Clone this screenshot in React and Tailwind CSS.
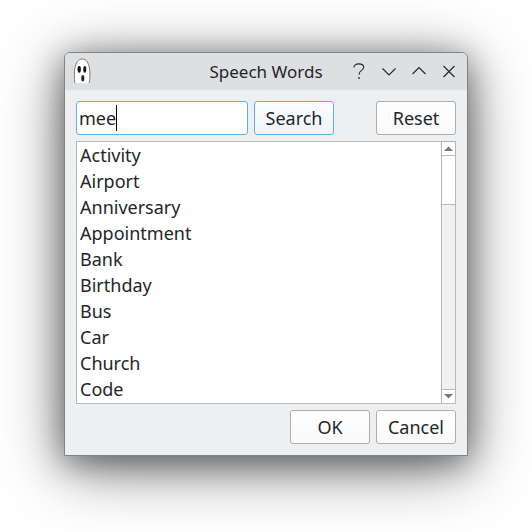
const words = [
  'Activity', 'Airport', 'Anniversary', 'Appointment', 'Bank',
  'Birthday', 'Bus', 'Car', 'Church', 'Code',
];

function GhostIcon() {
  return (
    <svg className="-mt-px" width="18" height="26" viewBox="0 0 18 26" fill="none">
      <path d="M1.900 25C.8 17 .6 1 9.200 1c8.400 0 8.600 16 6.900 24z" fill="#fff" />
      <path d="M1.900 25C.8 17 .6 1 9.200 1c8.400 0 8.600 16 6.900 24" stroke="#777" strokeWidth="1" />
      <ellipse cx="6.200" cy="11.300" rx="1.700" ry="3.400" fill="#111" />
      <ellipse cx="11.800" cy="11.300" rx="1.500" ry="3.400" fill="#111" />
      <ellipse cx="9.800" cy="20.300" rx="1.500" ry="3.200" fill="#222" />
    </svg>
  );
}

function TitleIcon({ d, children }) {
  return (
    <svg width="18" height="18" viewBox="0 0 18 18" fill="none" stroke="#232629" strokeWidth="1.1">
      <path d={d} />
      {children}
    </svg>
  );
}

function Button({ children, active }) {
  return (
    <button
      className={
        'flex h-[34px] w-20 items-center justify-center rounded-[3px] border bg-linear-to-b text-[18px] leading-6 ' +
        (active ? 'border-[#5ab5e2] from-[#fdfdfe] to-[#eef4fa]' : 'border-[#adaeb0] from-white to-[#f9f9fa]')
      }
    >
      {children}
    </button>
  );
}

export default function App() {
  return (
    <div className="h-[532px] w-[532px] overflow-hidden bg-white pl-16 pt-[52px] font-['Noto_Sans',sans-serif] text-[#232629]">
      <div className="flex h-[404px] w-[404px] flex-col rounded-t-[6px] border border-[#818283] bg-[#eeeff1] shadow-[0_12px_64px_rgba(0,0,0,0.5),0_6px_32px_rgba(0,0,0,0.42)]">
        <header className="grid h-[37px] shrink-0 grid-cols-[1fr_auto_1fr] items-center rounded-t-[5px] bg-[#dedfe1] pl-2 pr-[9px]">
          <GhostIcon />
          <h1 className="pl-px text-[17px] leading-6">Speech Words</h1>
          <div className="-mt-px flex justify-end gap-3">
            <TitleIcon d="M3.900 5.500C3.900 3.200 5.800 1.900 8.700 1.900C11.900 1.900 13.700 3.200 13.700 5.200C13.700 7 12.500 7.800 11.300 8.600C9.800 9.600 9 10.500 9 12.800">
              <rect x="8.200" y="15.200" width="1.600" height="1.600" fill="#232629" stroke="none" />
            </TitleIcon>
            <TitleIcon d="M2.500 6.500l6.500 6.500L15.500 6.500" />
            <TitleIcon d="M2.500 12L9 5.500l6.500 6.500" />
            <TitleIcon d="M3.500 4l11 11M14.500 4l-11 11" />
          </div>
        </header>
        <main className="flex flex-1 flex-col gap-1.5 px-[11px] pb-[11px] pt-[11px]">
          <div className="flex gap-1.5">
            <div className="flex h-[34px] w-[172px] items-center rounded-[3px] border border-[#5ab5e2] bg-white pl-0.5 text-[18px]">
              <span className="leading-6">mee</span>
              <span className="h-[26px] w-px bg-black" />
            </div>
            <Button active>Search</Button>
            <div className="ml-auto">
              <Button>Reset</Button>
            </div>
          </div>
          <div className="flex h-[263px] border border-[#b7b8ba] bg-white">
            <ul className="flex-1 pl-[3px] text-[18px] leading-[26px]">
              {words.map((word) => (
                <li key={word}>{word}</li>
              ))}
            </ul>
            <div className="flex w-3.5 flex-col border-l border-[#b7b8ba] bg-[#f1f1f2]">
              <div className="flex h-3.5 items-center justify-center border-b border-[#b7b8ba] bg-white">
                <svg width="9" height="5" viewBox="0 0 9 5"><path d="M0 5l4.500-4.500L9 5z" fill="#76787a" /></svg>
              </div>
              <div className="h-[49px] border-b border-[#b7b8ba] bg-white" />
              <div className="mt-auto flex h-3.5 items-center justify-center border-t border-[#b7b8ba] bg-white">
                <svg width="9" height="5" viewBox="0 0 9 5"><path d="M0 0h9L4.500 4.500z" fill="#76787a" /></svg>
              </div>
            </div>
          </div>
          <div className="flex justify-end gap-1.5">
            <Button>OK</Button>
            <Button>Cancel</Button>
          </div>
        </main>
      </div>
    </div>
  );
}
